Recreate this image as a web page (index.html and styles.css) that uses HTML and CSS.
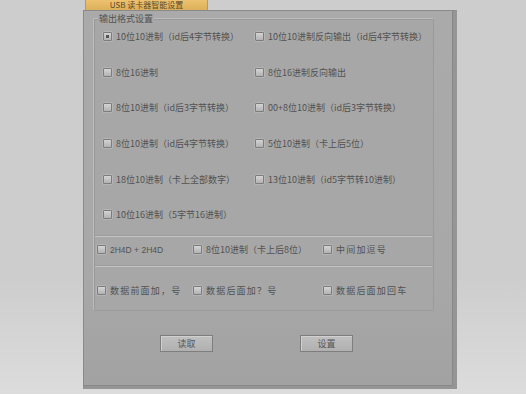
FILE: index.html
```html
<!DOCTYPE html>
<html lang="zh">
<head>
<meta charset="utf-8">
<link rel="stylesheet" href="styles.css">
</head>
<body>
<div class="wrap">
  <div class="tab">USB 读卡器智能设置</div>
  <div class="panel">
    <div class="group">
      <div class="legend">输出格式设置</div>
      <div class="grid">
        <label class="opt"><span class="box checked"></span><span>10位10进制（id后4字节转换）</span></label>
        <label class="opt"><span class="box"></span><span>10位10进制反向输出（id后4字节转换）</span></label>
        <label class="opt"><span class="box"></span><span>8位16进制</span></label>
        <label class="opt"><span class="box"></span><span>8位16进制反向输出</span></label>
        <label class="opt"><span class="box"></span><span>8位10进制（id后3字节转换）</span></label>
        <label class="opt"><span class="box"></span><span>00+8位10进制（id后3字节转换）</span></label>
        <label class="opt"><span class="box"></span><span>8位10进制（id后4字节转换）</span></label>
        <label class="opt"><span class="box"></span><span>5位10进制（卡上后5位）</span></label>
        <label class="opt"><span class="box"></span><span>18位10进制（卡上全部数字）</span></label>
        <label class="opt"><span class="box"></span><span>13位10进制（id5字节转10进制）</span></label>
        <label class="opt"><span class="box"></span><span>10位16进制（5字节16进制）</span></label>
      </div>
      <div class="sep"></div>
      <div class="row row-a">
        <label class="opt c1"><span class="box"></span><span class="lat">2H4D + 2H4D</span></label>
        <label class="opt c2"><span class="box"></span><span>8位10进制（卡上后8位）</span></label>
        <label class="opt c3"><span class="box"></span><span class="wide">中间加逗号</span></label>
      </div>
      <div class="sep"></div>
      <div class="row row-b">
        <label class="opt c1"><span class="box"></span><span class="wide">数据前面加，号</span></label>
        <label class="opt c2"><span class="box"></span><span class="wide">数据后面加？号</span></label>
        <label class="opt c3"><span class="box"></span><span class="wide">数据后面加回车</span></label>
      </div>
    </div>
    <div class="buttons">
      <div class="btn b1">读取</div>
      <div class="btn b2">设置</div>
    </div>
  </div>
</div>
</body>
</html>
```
FILE: styles.css
```css
html, body {
  margin: 0;
  padding: 0;
}
body {
  width: 526px;
  height: 394px;
  overflow: hidden;
  background: linear-gradient(#cdcdcd 0%, #cdcdcd 70%, #dcdcdc 100%);
  font-family: "Noto Sans CJK SC", "Noto Sans", sans-serif;
  color: #525252;
  font-size: 9px;
}
.wrap {
  padding-left: 83px;
  display: flex;
  flex-direction: column;
}
.tab {
  margin-left: 2px;
  width: 123px;
  height: 10px;
  background: linear-gradient(#ecc270, #dcb05a);
  color: #5a4a2a;
  font-size: 8px;
  line-height: 10px;
  text-align: center;
  box-sizing: border-box;
  border-left: 1px solid #b89a5a;
  border-right: 1px solid #b89a5a;
}
.panel {
  width: 374px;
  height: 379px;
  box-sizing: border-box;
  border: 1px solid #8a8a8a;
  border-right: 4px solid #959595;
  border-bottom: 3px solid #959595;
  background: linear-gradient(#aaaaaa 0%, #a8a8a8 70%, #a2a2a2 100%);
  box-shadow: inset -1px -1px 0 #888888;
  padding: 7px 0 0 9px;
}
.group {
  position: relative;
  width: 341px;
  height: 293px;
  box-sizing: border-box;
  border: 1px solid #bdbdbd;
  border-right-color: #9a9a9a;
  border-bottom-color: #9a9a9a;
  box-shadow: inset 1px 1px 0 #989898;
  border-radius: 2px;
  background: #a7a7a7;
}
.legend {
  position: absolute;
  left: 4px;
  top: -6px;
  padding: 0 1px;
  background: #a8a8a8;
  font-size: 9px;
  line-height: 11px;
}
.grid {
  display: grid;
  grid-template-columns: 152px 1fr;
  grid-auto-rows: 35.6px;
  padding-left: 9px;
}
.opt {
  display: flex;
  align-items: center;
  gap: 4px;
  white-space: nowrap;
}
.box {
  display: inline-block;
  position: relative;
  width: 9px;
  height: 9px;
  flex: none;
  box-sizing: border-box;
  border: 1px solid #7c7c7c;
  border-radius: 1px;
  background: linear-gradient(#d4d4d4, #b2b2b2);
  box-shadow: 0 0 0 0.5px #c4c4c4;
}
.box.checked::after {
  content: "";
  position: absolute;
  left: 2px;
  top: 2px;
  width: 3px;
  height: 3px;
  background: #555555;
}
.sep {
  margin: 2px 1px 0;
  height: 1px;
  background: #c4c4c4;
  border-top: 1px solid #9c9c9c;
}
.row {
  display: flex;
  align-items: center;
  padding-left: 3px;
}
.row-a {
  height: 26px;
}
.row-b {
  height: 47px;
}
.c1 { width: 96px; }
.c2 { width: 130px; }
.lat {
  font-family: "Liberation Sans", sans-serif;
  font-size: 8.5px;
}
.wide {
  letter-spacing: 1.2px;
}
.buttons {
  display: flex;
  padding-top: 24px;
  padding-left: 67px;
  gap: 87px;
}
.btn {
  width: 53px;
  height: 17px;
  box-sizing: border-box;
  border: 1px solid #7e7e7e;
  background: linear-gradient(#c0c0c0, #b0b0b0);
  box-shadow: inset 1px 1px 0 #d0d0d0;
  text-align: center;
  line-height: 15px;
  font-size: 9px;
  color: #555555;
}
```
